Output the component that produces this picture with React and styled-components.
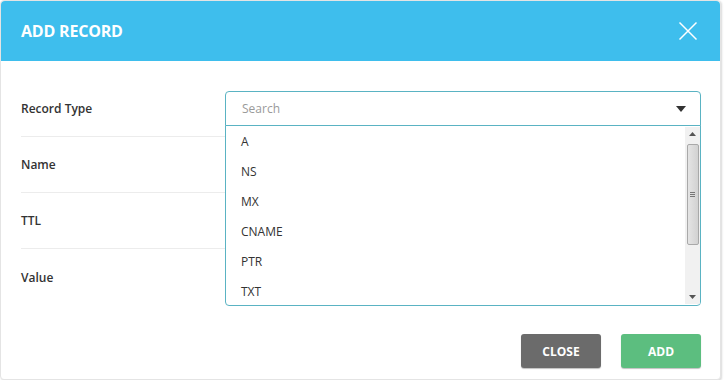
import React, {useState} from 'react';
import styled, {createGlobalStyle} from 'styled-components';

const GlobalStyle = createGlobalStyle`
    html, body {
        margin: 0;
        padding: 0;
        background: #ffffff;
        font-family: "Open Sans", "Liberation Sans", sans-serif;
    }
`;

// 모달 전체
const Modal = styled.div`
    width: 719px;
    height: 378px;
    background: #ffffff;
    border: 1px solid #e4e4e4;
    border-radius: 4px;
    box-shadow: 1px 1px 2px rgba(0, 0, 0, 0.15);
    display: flex;
    flex-direction: column;
`;

const Header = styled.div`
    height: 60px;
    flex-shrink: 0;
    background: #3ebeed;
    border-radius: 4px 4px 0 0;
    padding: 0 22px 0 20px;
    display: flex;
    align-items: center;
    justify-content: space-between;
`;

const Title = styled.h2`
    margin: 0;
    color: #ffffff;
    font-size: 16px;
    font-weight: 700;
    letter-spacing: -0.2px;
`;

const CloseIcon = styled.button`
    width: 20px;
    height: 20px;
    padding: 0;
    border: none;
    background: none;
    display: flex;
    cursor: pointer;
`;

const Body = styled.div`
    padding: 20px 19px 0 20px;
`;

const Row = styled.div`
    height: 56px;
    display: flex;
    align-items: center;
    border-bottom: ${props => props.last ? 'none' : '1px solid #ececec'};
    box-sizing: border-box;
`;

const Label = styled.div`
    width: 204px;
    font-size: 12px;
    font-weight: 600;
    color: #333333;
`;

const Field = styled.div`
    flex: 1;
    position: relative;
`;

const Input = styled.input`
    width: 100%;
    height: 35px;
    box-sizing: border-box;
    border: 1px solid #dddddd;
    border-radius: 4px;
`;

const SelectBox = styled.div`
    height: 35px;
    box-sizing: border-box;
    border: 1px solid #5ab3c3;
    border-radius: 4px 4px 0 0;
    padding: 0 14px 0 16px;
    display: flex;
    align-items: center;
    justify-content: space-between;
`;

const SearchInput = styled.input`
    flex: 1;
    border: none;
    outline: none;
    padding: 0;
    font-family: inherit;
    font-size: 12px;
    color: #333333;
    &::placeholder {
        color: #9a9a9a;
    }
`;

const Caret = styled.span`
    width: 0;
    height: 0;
    border-left: 5px solid transparent;
    border-right: 5px solid transparent;
    border-top: 6px solid #333333;
`;

// 드롭다운 목록
const DropList = styled.div`
    position: absolute;
    top: 34px;
    left: 0;
    right: 0;
    height: 181px;
    box-sizing: border-box;
    background: #ffffff;
    border: 1px solid #5ab3c3;
    border-radius: 0 0 4px 4px;
    display: flex;
    z-index: 10;
    overflow: hidden;
`;

const Options = styled.ul`
    flex: 1;
    margin: 0;
    padding: 1px 0 0 0;
    list-style: none;
`;

const Option = styled.li`
    height: 30px;
    line-height: 30px;
    padding-left: 15px;
    font-size: 12px;
    color: #333333;
    cursor: pointer;
`;

const ScrollTrack = styled.div`
    width: 15px;
    margin: 1px 0;
    background: #f1f1f1;
    display: flex;
    flex-direction: column;
    align-items: center;
`;

const ScrollArrow = styled.div`
    height: 14px;
    display: flex;
    align-items: center;
    justify-content: center;
`;

const Thumb = styled.div`
    width: 12px;
    height: 101px;
    margin-top: 3px;
    box-sizing: border-box;
    border: 1px solid #a9a9a9;
    border-radius: 2px;
    background: linear-gradient(to right, #e4e4e4, #d2d2d2);
    display: flex;
    align-items: center;
    justify-content: center;
`;

const Grip = styled.div`
    width: 5px;
    height: 6px;
    background: repeating-linear-gradient(to bottom, #777777 0 1px, transparent 1px 2px);
`;

const Spacer = styled.div`
    flex: 1;
`;

const Footer = styled.div`
    display: flex;
    justify-content: flex-end;
    gap: 20px;
    padding: 29px 19px 0 0;
`;

const Button = styled.button`
    width: 80px;
    height: 34px;
    border: none;
    border-radius: 3px;
    background: ${props => props.color};
    box-shadow: 0 1px 1px rgba(0, 0, 0, 0.25);
    color: #ffffff;
    font-family: inherit;
    font-size: 12px;
    font-weight: 700;
    cursor: pointer;
`;

const recordTypes = ['A', 'NS', 'MX', 'CNAME', 'PTR', 'TXT'];

const Arrow = ({down}) => (
    <svg width="7" height="4" viewBox="0 0 7 4">
        <path d={down ? 'M0 0 L7 0 L3.5 4 Z' : 'M0 4 L7 4 L3.5 0 Z'} fill="#555555"/>
    </svg>
);

const App = () => {
    const [search, setSearch] = useState('');

    return (
        <>
            <GlobalStyle/>
            <Modal>
                <Header>
                    <Title>ADD RECORD</Title>
                    <CloseIcon aria-label="close">
                        <svg width="20" height="20" viewBox="0 0 20 20">
                            <path d="M1.5 1.5 L18.5 18.5 M18.5 1.5 L1.5 18.5" stroke="#ffffff" strokeWidth="1.5" fill="none"/>
                        </svg>
                    </CloseIcon>
                </Header>
                <Body>
                    <Row>
                        <Label>Record Type</Label>
                        <Field>
                            <SelectBox>
                                <SearchInput placeholder="Search" value={search} onChange={e => setSearch(e.target.value)}/>
                                <Caret/>
                            </SelectBox>
                            <DropList>
                                <Options>
                                    {recordTypes.map(type => <Option key={type}>{type}</Option>)}
                                </Options>
                                <ScrollTrack>
                                    <ScrollArrow><Arrow/></ScrollArrow>
                                    <Thumb><Grip/></Thumb>
                                    <Spacer/>
                                    <ScrollArrow><Arrow down/></ScrollArrow>
                                </ScrollTrack>
                            </DropList>
                        </Field>
                    </Row>
                    <Row>
                        <Label>Name</Label>
                        <Field><Input/></Field>
                    </Row>
                    <Row>
                        <Label>TTL</Label>
                        <Field><Input/></Field>
                    </Row>
                    <Row last>
                        <Label>Value</Label>
                        <Field><Input/></Field>
                    </Row>
                </Body>
                <Footer>
                    <Button color="#6b6b6b">CLOSE</Button>
                    <Button color="#5cbe7f">ADD</Button>
                </Footer>
            </Modal>
        </>
    );
};

export default App;
